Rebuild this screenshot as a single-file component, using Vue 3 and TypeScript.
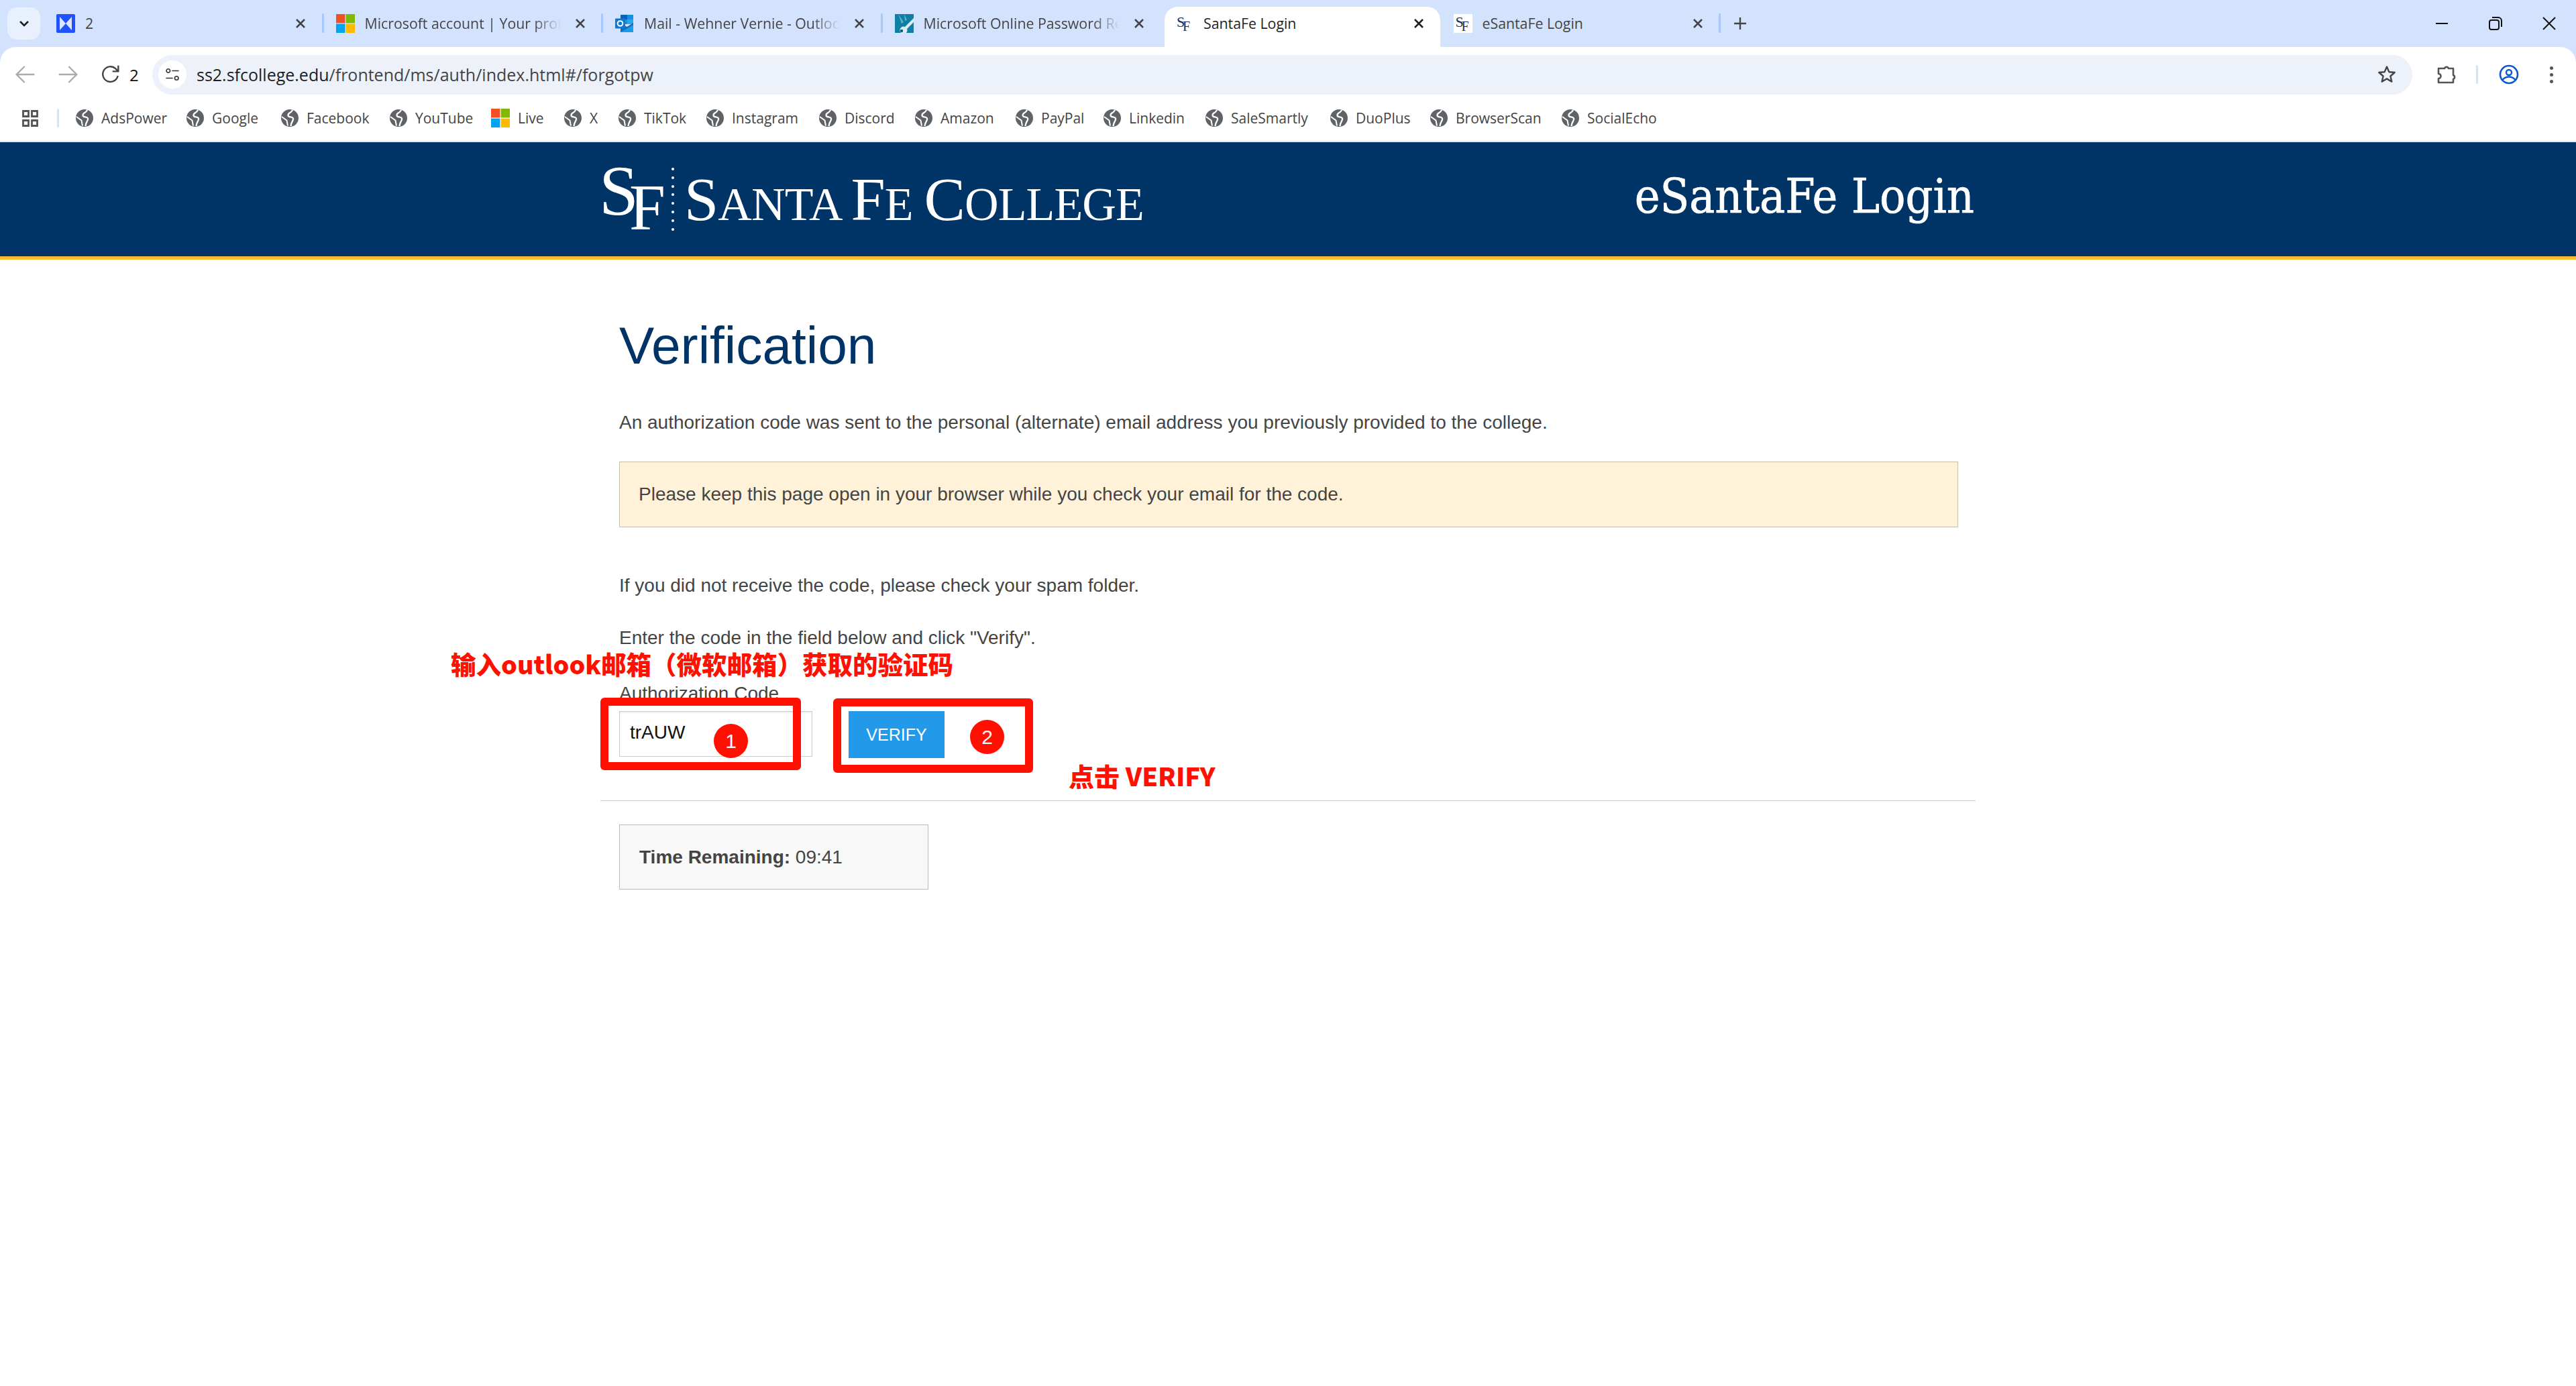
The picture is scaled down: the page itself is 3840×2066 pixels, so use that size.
<script setup lang="ts">
interface Tab { title: string; icon: string; fade: boolean; active?: boolean }
interface Mark { name: string; width: number; ms?: boolean }

const tabs: Tab[] = [
  { title: '2', icon: 'ads', fade: false },
  { title: 'Microsoft account | Your profile', icon: 'ms', fade: true },
  { title: 'Mail - Wehner Vernie - Outlook', icon: 'outlook', fade: true },
  { title: 'Microsoft Online Password Reset', icon: 'key', fade: true },
  { title: 'SantaFe Login', icon: 'sf', fade: false, active: true },
  { title: 'eSantaFe Login', icon: 'sfbox', fade: false },
]

const marks: Mark[] = [
  { name: 'AdsPower', width: 165 },
  { name: 'Google', width: 141 },
  { name: 'Facebook', width: 162 },
  { name: 'YouTube', width: 151 },
  { name: 'Live', width: 109, ms: true },
  { name: 'X', width: 81 },
  { name: 'TikTok', width: 131 },
  { name: 'Instagram', width: 168 },
  { name: 'Discord', width: 143 },
  { name: 'Amazon', width: 150 },
  { name: 'PayPal', width: 131 },
  { name: 'Linkedin', width: 152 },
  { name: 'SaleSmartly', width: 186 },
  { name: 'DuoPlus', width: 149 },
  { name: 'BrowserScan', width: 196 },
  { name: 'SocialEcho', width: 150 },
]
</script>

<template>
  <div class="page">
    <div class="chrome">
      <div class="tabstrip">
        <div class="tab-menu">
          <svg width="20" height="20" viewBox="0 0 20 20"><path d="M4 7l6 6 6-6" fill="none" stroke="#1f1f1f" stroke-width="2.6" /></svg>
        </div>
        <div v-for="t in tabs" :key="t.title" class="tab" :class="{ active: t.active }">
          <svg v-if="t.icon === 'ads'" class="fav" viewBox="0 0 28 28">
            <rect width="28" height="28" rx="2" fill="#2053ff" />
            <path d="M5 4l9 10-9 10zM23 4l-9 10 9 10z" fill="#dfe6ff" />
          </svg>
          <svg v-else-if="t.icon === 'ms'" class="fav" viewBox="0 0 28 28">
            <rect width="13.4" height="13.4" fill="#f25022" />
            <rect x="14.6" width="13.4" height="13.4" fill="#7fba00" />
            <rect y="14.6" width="13.4" height="13.4" fill="#00a4ef" />
            <rect x="14.6" y="14.6" width="13.4" height="13.4" fill="#ffb900" />
          </svg>
          <svg v-else-if="t.icon === 'outlook'" class="fav" viewBox="0 0 28 28">
            <rect x="8" y="1" width="19" height="14" fill="#1490df" />
            <rect x="8" y="1" width="10" height="7" fill="#0364b8" />
            <rect x="18" y="8" width="9" height="7" fill="#28a8ea" />
            <path d="M8 13l9.500 6 9.500-6v14H8z" fill="#0a6cc7" />
            <path d="M8 27l19-11v11z" fill="#1c9be8" />
            <rect y="6.500" width="15" height="15" rx="1" fill="#0f78d4" />
            <circle cx="7.500" cy="14" r="3.800" fill="none" stroke="#fff" stroke-width="2" />
          </svg>
          <svg v-else-if="t.icon === 'key'" class="fav" viewBox="0 0 28 28">
            <rect width="28" height="28" fill="#0f80a5" />
            <path d="M5 0l8 12-3 2zM14 0l4 9-3 1z" fill="#5cb3cc" />
            <path d="M28 6L15 19a5.500 5.500 0 1 0 3 3l10-10z" fill="#dcebf2" />
            <circle cx="10" cy="25" r="2.200" fill="#0b5d7c" />
          </svg>
          <span v-else class="fav-sf" :class="{ boxed: t.icon === 'sfbox' }"><span>S</span><span class="fav-f">F</span></span>
          <span class="tab-title" :class="{ fade: t.fade }">{{ t.title }}</span>
          <svg class="tab-close" viewBox="0 0 16 16"><path d="M2 2l12 12M14 2L2 14" fill="none" stroke="currentColor" stroke-width="2.500" /></svg>
          <i v-if="!t.active" class="tab-sep"></i>
        </div>
        <svg class="plus" viewBox="0 0 20 20"><path d="M10 1v18M1 10h18" fill="none" stroke="#444" stroke-width="2.400" /></svg>
        <div class="winctl">
          <span><svg width="18" height="18" viewBox="0 0 18 18"><path d="M0 9h18" stroke="#111" stroke-width="2" /></svg></span>
          <span><svg width="20" height="20" viewBox="0 0 20 20"><rect x="1" y="5" width="14" height="14" rx="3" fill="none" stroke="#111" stroke-width="2" /><path d="M5 1h9a5 5 0 0 1 5 5v9" fill="none" stroke="#111" stroke-width="2" /></svg></span>
          <span><svg width="20" height="20" viewBox="0 0 20 20"><path d="M1 1l18 18M19 1L1 19" fill="none" stroke="#111" stroke-width="2" /></svg></span>
        </div>
      </div>

      <div class="toolbar">
        <svg class="nav back" viewBox="0 0 24 24"><path d="M22 12H3M11 3l-9 9 9 9" fill="none" stroke="#a9abae" stroke-width="1.800" /></svg>
        <svg class="nav fwd" viewBox="0 0 24 24"><path d="M2 12h19M13 3l9 9-9 9" fill="none" stroke="#a9abae" stroke-width="1.800" /></svg>
        <svg class="nav reload" viewBox="0 0 24 24"><path d="M20 13.500A8.500 8.500 0 1 1 17.500 5.500L20 8" fill="none" stroke="#444" stroke-width="1.800" /><path d="M20.500 2v6.500H14" fill="none" stroke="#444" stroke-width="1.800" /></svg>
        <span class="reload-count">2</span>
        <div class="addr">
          <span class="site-info">
            <svg width="32" height="28" viewBox="0 0 32 28"><circle cx="7" cy="6" r="4" fill="none" stroke="#333" stroke-width="2.400" /><path d="M15 6h15M2 22h15" stroke="#333" stroke-width="2.400" /><circle cx="25" cy="22" r="4" fill="none" stroke="#333" stroke-width="2.400" /></svg>
          </span>
          <span class="url"><b>ss2.sfcollege.edu</b>/frontend/ms/auth/index.html#/forgotpw</span>
          <svg class="star" viewBox="0 0 28 28"><path d="M14 2.500l3.400 7.700 8.300.8-6.300 5.500 1.900 8.200-7.300-4.300-7.300 4.300 1.900-8.200L2.300 11l8.300-.8z" fill="none" stroke="#444" stroke-width="2.400" stroke-linejoin="round" /></svg>
        </div>
        <div class="actions">
          <svg class="puzzle" viewBox="0 0 30 30"><path d="M3 6h9a3.200 3.200 0 0 1 6 0h7v10a3.200 3.200 0 0 1 0 6v5H3v-6a3.500 3.500 0 0 0 0-7z" fill="none" stroke="#555" stroke-width="2.600" stroke-linejoin="round" /></svg>
          <i class="bar"></i>
          <svg class="profile" viewBox="0 0 30 30"><circle cx="15" cy="15" r="13" fill="none" stroke="#0b57d0" stroke-width="2.600" /><circle cx="15" cy="12" r="4" fill="none" stroke="#0b57d0" stroke-width="2.400" /><path d="M5.500 23c3-3.500 6-4.500 9.500-4.500s6.500 1 9.500 4.500" fill="none" stroke="#0b57d0" stroke-width="2.400" /></svg>
          <span class="dots"><i></i><i></i><i></i></span>
        </div>
      </div>

      <div class="bookmarks">
        <svg class="apps" viewBox="0 0 24 25"><path d="M1.500 1.500h8v8h-8zM14.500 1.500h8v8h-8zM1.500 15.500h8v8h-8zM14.500 15.500h8v8h-8z" fill="none" stroke="#555" stroke-width="2.800" /></svg>
        <i class="bar bm-bar"></i>
        <div v-for="m in marks" :key="m.name" class="mark" :style="{ width: m.width + 'px' }">
          <svg v-if="m.ms" class="ms-ico" viewBox="0 0 28 28">
            <rect width="13.400" height="13.400" fill="#f25022" />
            <rect x="14.600" width="13.400" height="13.400" fill="#7fba00" />
            <rect y="14.600" width="13.400" height="13.400" fill="#00a4ef" />
            <rect x="14.600" y="14.600" width="13.400" height="13.400" fill="#ffb900" />
          </svg>
          <svg v-else class="globe" viewBox="0 0 26 26">
            <circle cx="13" cy="13" r="13" fill="#5f6368" />
            <path d="M17 .8C15 6 10 5 10.500 9c.4 3.500 6 1.500 7.500 4.500 1.300 2.700-3 4.500-3.500 11.500" fill="none" stroke="#fff" stroke-width="2.300" />
            <path d="M1 11l7.500 5.500 1.500 8" fill="none" stroke="#fff" stroke-width="2" />
          </svg>
          <span class="mark-name">{{ m.name }}</span>
        </div>
      </div>
    </div>

    <header class="site-header">
      <div class="site-inner">
        <div class="logo">
          <span class="mono"><span class="mono-s">S</span><span class="mono-f">F</span></span>
          <span class="dotted"><i v-for="n in 8" :key="n"></i></span>
          <span class="wordmark"><span class="big">S</span>ANTA <span class="big">F</span>E <span class="big">C</span>OLLEGE</span>
        </div>
        <div class="site-title">eSantaFe Login</div>
      </div>
    </header>

    <main class="content">
      <h1>Verification</h1>
      <p class="intro">An authorization code was sent to the personal (alternate) email address you previously provided to the college.</p>
      <div class="alert">Please keep this page open in your browser while you check your email for the code.</div>
      <p class="spam">If you did not receive the code, please check your spam folder.</p>
      <p class="enter">Enter the code in the field below and click "Verify".</p>
      <label class="code-label">Authorization Code</label>
      <div class="form-row">
        <div class="code-input">trAUW</div>
        <button class="verify">VERIFY</button>
      </div>
      <hr />
      <div class="timer"><b>Time Remaining:</b> 09:41</div>
    </main>

    <div class="note note-one">输入outlook邮箱（微软邮箱）获取的验证码</div>
    <div class="note note-two">点击 VERIFY</div>
    <div class="frame frame-one"></div>
    <div class="frame frame-two"></div>
    <div class="num num-one">1</div>
    <div class="num num-two">2</div>
  </div>
</template>

<style>
html, body { margin: 0; background: #fff; }
</style>

<style scoped>
.page {
  position: relative;
  width: 3840px;
  height: 2066px;
  overflow: hidden;
  background: #fff;
  font-family: "Liberation Sans", Arial, sans-serif;
}
.chrome { background: #d3e3fd; font-family: "Open Sans", "Noto Sans", sans-serif; }
.tabstrip { display: flex; height: 70px; }
.tab-menu {
  width: 49px; height: 48px; margin: 11px 5px 0 11px;
  display: flex; align-items: center; justify-content: center;
  background: #e9f0fd; border-radius: 14px;
}
.tab {
  position: relative; width: 416.500px; height: 60px; margin-top: 10px;
  padding: 11px 0 0 19px; box-sizing: border-box;
  display: flex; align-items: flex-start;
  font-size: 21.300px; color: #444;
}
.tab.active { background: #fff; color: #1f1f1f; border-radius: 20px 20px 0 0; width: 411px; margin-left: 5px; margin-right: 0.500px; padding-left: 15px; }
.fav { width: 28px; height: 28px; flex: none; }
.fav-sf {
  width: 28px; height: 28px; flex: none; position: relative; display: block;
  font: 22px/1 "Liberation Serif", serif; color: #1c2f5c;
}
.fav-sf.boxed { background: #fff; }
.fav-sf span { position: absolute; left: 3px; top: 1px; }
.fav-sf .fav-f { left: 12px; top: 8px; font-size: 20px; }
.tab-title {
  margin-left: 15px; width: 292px; line-height: 28px; height: 30px; overflow: hidden; white-space: nowrap;
}
.tab-title.fade { -webkit-mask-image: linear-gradient(to right, #000 86%, transparent 100%); mask-image: linear-gradient(to right, #000 86%, transparent 100%); }
.tab-close { position: absolute; left: 375px; top: 17px; width: 16px; height: 16px; color: #444; }
.tab.active .tab-close { left: 371px; color: #1f1f1f; }
.tab-sep { position: absolute; right: -1px; top: 10px; width: 3px; height: 29px; border-radius: 2px; background: #a8c7fa; }
.tab:nth-of-type(5) .tab-sep { display: none; }
.plus { width: 20px; height: 20px; margin: 25px 0 0 20px; }
.winctl { margin-left: auto; display: flex; }
.winctl span { width: 80px; height: 70px; display: flex; align-items: center; justify-content: center; }

.toolbar {
  height: 82px; background: #fff; border-radius: 24px 24px 0 0;
  display: flex; align-items: center; padding-left: 22px; box-sizing: border-box;
}
.nav { width: 32px; height: 32px; flex: none; }
.fwd { margin-left: 31px; }
.reload { margin-left: 32px; }
.reload-count { margin-left: 12px; font-size: 24px; color: #111; width: 19px; }
.addr {
  flex: 1; height: 59px; margin-left: 15px; border-radius: 30px; background: #ecf1fa;
  display: flex; align-items: center; padding: 0 22px 0 9px;
}
.site-info {
  width: 42px; height: 42px; border-radius: 50%; background: #fff;
  display: flex; align-items: center; justify-content: center;
}
.site-info svg { width: 22px; height: 20px; }
.url { margin-left: 15px; font-size: 25px; color: #444; white-space: nowrap; }
.url b { font-weight: 400; color: #1f1f1f; }
.star { margin-left: auto; width: 28px; height: 28px; margin-right: 2px; }
.actions { width: 244px; flex: none; display: flex; align-items: center; }
.puzzle { width: 30px; height: 30px; margin-left: 36px; }
.bar { display: block; width: 3px; height: 28px; border-radius: 2px; background: #d3e3fd; }
.actions .bar { margin-left: 29px; }
.profile { width: 30px; height: 30px; margin-left: 31px; }
.dots { margin-left: 46px; display: flex; flex-direction: column; gap: 5px; }
.dots i { display: block; width: 5px; height: 5px; border-radius: 50%; background: #555; }

.bookmarks {
  height: 60px; background: #fff; border-bottom: 2px solid #e6e6e6; box-sizing: border-box;
  display: flex; align-items: center; padding-left: 33px; padding-bottom: 10px;
}
.apps { width: 24px; height: 25px; flex: none; }
.bm-bar { margin-left: 28px; margin-right: 25px; }
.mark { display: flex; align-items: center; flex: none; font-size: 21px; color: #444; white-space: nowrap; }
.globe { width: 26px; height: 26px; flex: none; margin-right: 12px; }
.ms-ico { width: 28px; height: 28px; flex: none; margin-right: 12px; }

.site-header { height: 175px; box-sizing: border-box; background: #003366; border-bottom: 5px solid #f8bb30; }
.site-inner {
  width: 2050px; margin: 0 auto; height: 100%; display: flex; justify-content: space-between;
}
.logo { display: flex; align-items: flex-start; color: #fff; font-family: "Liberation Serif", "Times New Roman", serif; }
.mono { position: relative; display: block; width: 98px; height: 170px; }
.mono-s { position: absolute; left: -2px; top: 20px; font-size: 106px; line-height: 1; }
.mono-f { position: absolute; left: 43px; top: 49px; font-size: 97px; line-height: 1; }
.dotted { display: flex; flex-direction: column; gap: 8.800px; margin: 38px 0 0 8px; width: 19px; }
.dotted i { display: block; width: 4px; height: 4px; border-radius: 50%; background: #fff; }
.wordmark { margin-top: 45px; font-size: 70px; line-height: 80px; letter-spacing: -0.850px; white-space: nowrap; }
.big { font-size: 92px; }
.site-title {
  color: #fff; font-family: "DejaVu Serif Condensed", "DejaVu Serif", serif;
  font-size: 71px; line-height: 80px; margin-top: 41px; margin-right: 2px; white-space: nowrap;
  -webkit-text-stroke: 0.7px #fff;
}

.content { width: 2050px; margin: 0 auto; padding: 83px 26px 0 28px; box-sizing: border-box; color: #444; font-size: 28px; line-height: 40px; }
h1 { margin: 0; font-size: 78.400px; line-height: 90px; font-weight: 400; color: #003366; }
p { margin: 0; }
.intro { margin-top: 50px; }
.alert {
  margin-top: 38px; padding: 28px 28px; border: 1px solid #c8bda5; background: #fff2d9;
}
.spam { margin-top: 67px; }
.enter { margin-top: 38px; }
.code-label { display: block; margin-top: 43px; }
.form-row { display: flex; margin-top: 6px; height: 70px; }
.code-input {
  width: 288px; height: 68px; box-sizing: border-box; border: 1px solid #ccc; padding-left: 15px;
  color: #111; line-height: 62px; box-shadow: inset 0 2px 2px rgba(0,0,0,.06);
}
.verify {
  margin-left: 54px; width: 143px; height: 70px; border: 0; padding: 0; background: #2299e9; color: #fff;
  font: 25px "Liberation Sans", Arial, sans-serif;
}
hr { margin: 63px -26px 0 -28px; border: 0; height: 1px; background: #ccc; }
.timer {
  margin-top: 35px; width: 461px; height: 97px; box-sizing: border-box; border: 1px solid #bbb; background: #f8f8f8;
  padding: 28px 29px;
}
.timer b { font-weight: 700; }

.note {
  position: absolute; color: #ff1000; font-weight: 900; white-space: nowrap;
  font-family: "Noto Sans CJK SC", "Liberation Sans", sans-serif; line-height: 1;
}
.note-one { left: 672px; top: 970px; font-size: 37.500px; }
.note-two { left: 1593px; top: 1137px; font-size: 38px; }
.frame { position: absolute; border: 12px solid #ff1000; border-radius: 6px; box-sizing: border-box; }
.frame-one { left: 895px; top: 1040px; width: 299px; height: 108px; }
.frame-two { left: 1242px; top: 1041px; width: 298px; height: 111px; }
.num {
  position: absolute; width: 51px; height: 51px; border-radius: 50%; background: #ff1000; color: #fff;
  font-size: 30px; line-height: 51px; text-align: center;
}
.num-one { left: 1064px; top: 1079px; }
.num-two { left: 1446px; top: 1073px; }
</style>
